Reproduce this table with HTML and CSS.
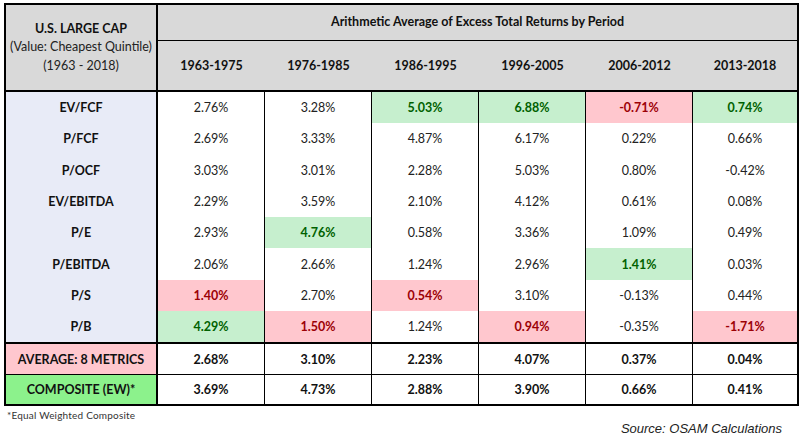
FILE: index.html
```html
<!DOCTYPE html>
<html>
<head>
<meta charset="utf-8">
<link rel="stylesheet" href="styles.css">
</head>
<body>
<div class="page">
  <table class="grid">
    <colgroup>
      <col class="c-label"><col class="c-p"><col class="c-p"><col class="c-p"><col class="c-p"><col class="c-p"><col class="c-last">
    </colgroup>
    <thead>
      <tr class="h1">
        <th class="corner" rowspan="2">
          <div class="corner-title">U.S. LARGE CAP</div>
          <div>(Value: Cheapest Quintile)</div>
          <div>(1963 - 2018)</div>
        </th>
        <th class="title" colspan="6">Arithmetic Average of Excess Total Returns by Period</th>
      </tr>
      <tr class="h2">
        <th>1963-1975</th><th>1976-1985</th><th>1986-1995</th><th>1996-2005</th><th>2006-2012</th><th>2013-2018</th>
      </tr>
    </thead>
    <tbody>
      <tr class="r31">
        <th class="metric">EV/FCF</th>
        <td>2.76%</td><td>3.28%</td><td class="good">5.03%</td><td class="good">6.88%</td><td class="bad">-0.71%</td><td class="good">0.74%</td>
      </tr>
      <tr class="r31">
        <th class="metric">P/FCF</th>
        <td>2.69%</td><td>3.33%</td><td>4.87%</td><td>6.17%</td><td>0.22%</td><td>0.66%</td>
      </tr>
      <tr class="r32">
        <th class="metric">P/OCF</th>
        <td>3.03%</td><td>3.01%</td><td>2.28%</td><td>5.03%</td><td>0.80%</td><td>-0.42%</td>
      </tr>
      <tr class="r31">
        <th class="metric">EV/EBITDA</th>
        <td>2.29%</td><td>3.59%</td><td>2.10%</td><td>4.12%</td><td>0.61%</td><td>0.08%</td>
      </tr>
      <tr class="r31">
        <th class="metric">P/E</th>
        <td>2.93%</td><td class="good">4.76%</td><td>0.58%</td><td>3.36%</td><td>1.09%</td><td>0.49%</td>
      </tr>
      <tr class="r32">
        <th class="metric">P/EBITDA</th>
        <td>2.06%</td><td>2.66%</td><td>1.24%</td><td>2.96%</td><td class="good">1.41%</td><td>0.03%</td>
      </tr>
      <tr class="r31">
        <th class="metric">P/S</th>
        <td class="bad">1.40%</td><td>2.70%</td><td class="bad">0.54%</td><td>3.10%</td><td>-0.13%</td><td>0.44%</td>
      </tr>
      <tr class="r31 last">
        <th class="metric">P/B</th>
        <td class="good">4.29%</td><td class="bad">1.50%</td><td>1.24%</td><td class="bad">0.94%</td><td>-0.35%</td><td class="bad">-1.71%</td>
      </tr>
      <tr class="avg">
        <th class="avg-label">AVERAGE: 8 METRICS</th>
        <td>2.68%</td><td>3.10%</td><td>2.23%</td><td>4.07%</td><td>0.37%</td><td>0.04%</td>
      </tr>
      <tr class="comp">
        <th class="comp-label">COMPOSITE (EW)*</th>
        <td>3.69%</td><td>4.73%</td><td>2.88%</td><td>3.90%</td><td>0.66%</td><td>0.41%</td>
      </tr>
    </tbody>
  </table>
  <div class="footnote">*Equal Weighted Composite</div>
  <div class="source">Source: OSAM Calculations</div>
</div>
</body>
</html>
```

FILE: styles.css
```css
html, body {
  margin: 0;
  padding: 0;
  background: #ffffff;
}

.page {
  padding: 3px 0 0 4px;
  width: 801px;
  font-family: Lato, "Noto Sans", sans-serif;
  color: #222222;
}

.grid {
  table-layout: fixed;
  border-collapse: separate;
  border-spacing: 0;
  width: 795px;
  border: 2px solid #000;
  box-sizing: border-box;
  font-size: 12.5px;
}

.c-label { width: 152px; }
.c-p { width: 107px; }
.c-last { width: 104px; }

.grid th,
.grid td {
  padding: 0;
  text-align: center;
  vertical-align: middle;
  box-sizing: border-box;
  white-space: nowrap;
}

.grid th { font-weight: 700; color: #111; }

/* header */
.corner {
  background: #d9d9d9;
  border-right: 2px solid #000;
  border-bottom: 2px solid #000;
  font-weight: 400 !important;
  line-height: 18.5px;
  color: #222 !important;
}
.corner-title { font-weight: 700; color: #111; }

.h1 .title {
  background: #d9d9d9;
  height: 36px;
  border-bottom: 1px solid #000;
  padding-bottom: 2px;
}

.h2 th {
  background: #d9d9d9;
  height: 51px;
  border-bottom: 2px solid #000;
}

/* body */
.grid tbody td {
  border-right: 1px solid #000;
}
.grid tbody td:last-child { border-right: none; }

.metric,
.avg-label,
.comp-label {
  border-right: 2px solid #000;
}

.metric { background: #e8ebf7; }

.r31 > * { height: 31px; }
.r32 > * { height: 32px; }
.r31.last > * {
  height: 33px;
  border-bottom: 2px solid #000;
}

.good {
  background: #c6efce;
  color: #006100;
  font-weight: 700;
}
.bad {
  background: #ffc7ce;
  color: #9c0006;
  font-weight: 700;
}

.avg > * {
  height: 31px;
  border-bottom: 1px solid #000;
  font-weight: 700;
  color: #111;
}
.comp > * {
  height: 29px;
  font-weight: 700;
  color: #111;
}

.avg-label { background: #ffc7ce; }
.comp-label { background: #8cf28c; }

.footnote {
  margin-top: 2px;
  padding-left: 3px;
  font-size: 10px;
  line-height: 14px;
  color: #333;
  letter-spacing: 0.2px;
}

.source {
  width: 778px;
  text-align: right;
  font-family: "Liberation Sans", Arial, sans-serif;
  font-style: italic;
  font-size: 13px;
  line-height: 14px;
  color: #222;
}
```
